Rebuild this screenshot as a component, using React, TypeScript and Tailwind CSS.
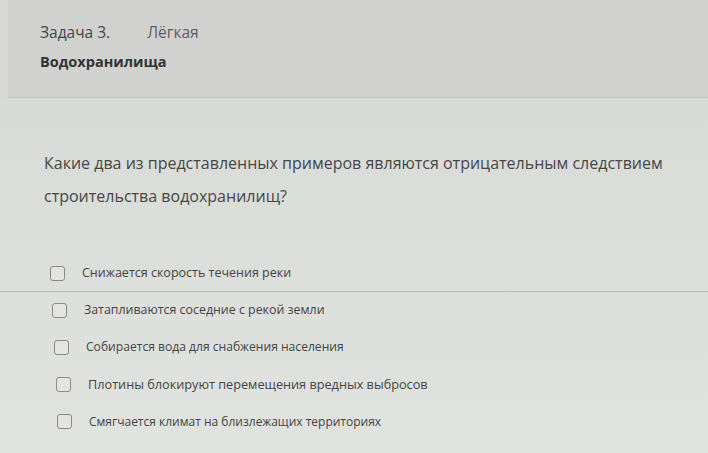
const options = [
	{ text: "Снижается скорость течения реки", pad: "pl-[50px]", size: "text-[12.5px]" },
	{ text: "Затапливаются соседние с рекой земли", pad: "pl-[52px]", size: "text-[12.4px]" },
	{ text: "Собирается вода для снабжения населения", pad: "pl-[54px]", size: "text-[12.1px]" },
	{ text: "Плотины блокируют перемещения вредных выбросов", pad: "pl-[56px]", size: "text-[12.7px]" },
	{ text: "Смягчается климат на близлежащих территориях", pad: "pl-[57px]", size: "text-[12px]" },
];

function Option({ text, pad, size, first }: { text: string; pad: string; size: string; first?: boolean }) {
	return (
		<label className={`flex items-center gap-[17px] ${pad} ${first ? "h-[36px]" : "h-[37px]"}`}>
			<span className="w-[15px] h-[15px] shrink-0 rounded-[3px] border-[1.5px] border-[#8a8b89] bg-[#e4e5e3]" />
			<span className={`${size} text-[#444]`}>{text}</span>
		</label>
	);
}

export default function App() {
	return (
		<div className="w-[708px] h-[453px] overflow-hidden bg-[#d7d9d6] font-['Open_Sans',sans-serif]">
			{/* шапка задачи */}
			<div className="ml-2 h-[98px] bg-[#d1d2d0] border-b border-[#c1c2c0] pl-8 pt-[21px]">
				<div className="flex items-baseline text-[15.5px]">
					<span className="text-[#454545]">Задача 3.</span>
					<span className="ml-[37px] text-[#5c5c5c]">Лёгкая</span>
				</div>
				<div className="mt-[7px] text-[14.5px] font-bold text-[#333]">Водохранилища</div>
			</div>

			{/* вопрос и варианты */}
			<div className="h-[355px] bg-gradient-to-b from-[#d9dbd8] to-[#e1e3e0] pt-[49px]">
				<p className="pl-[44px] text-[16px] leading-[33px] text-[#474747]">
					Какие два из представленных примеров являются отрицательным следствием
					<br />
					строительства водохранилищ?
				</p>

				<div className="mt-[42px]">
					<Option {...options[0]} first />
					<div className="h-px bg-[#b9bbb8]" />
					{options.slice(1).map((o) => (
						<Option key={o.text} {...o} />
					))}
				</div>
			</div>
		</div>
	);
}
